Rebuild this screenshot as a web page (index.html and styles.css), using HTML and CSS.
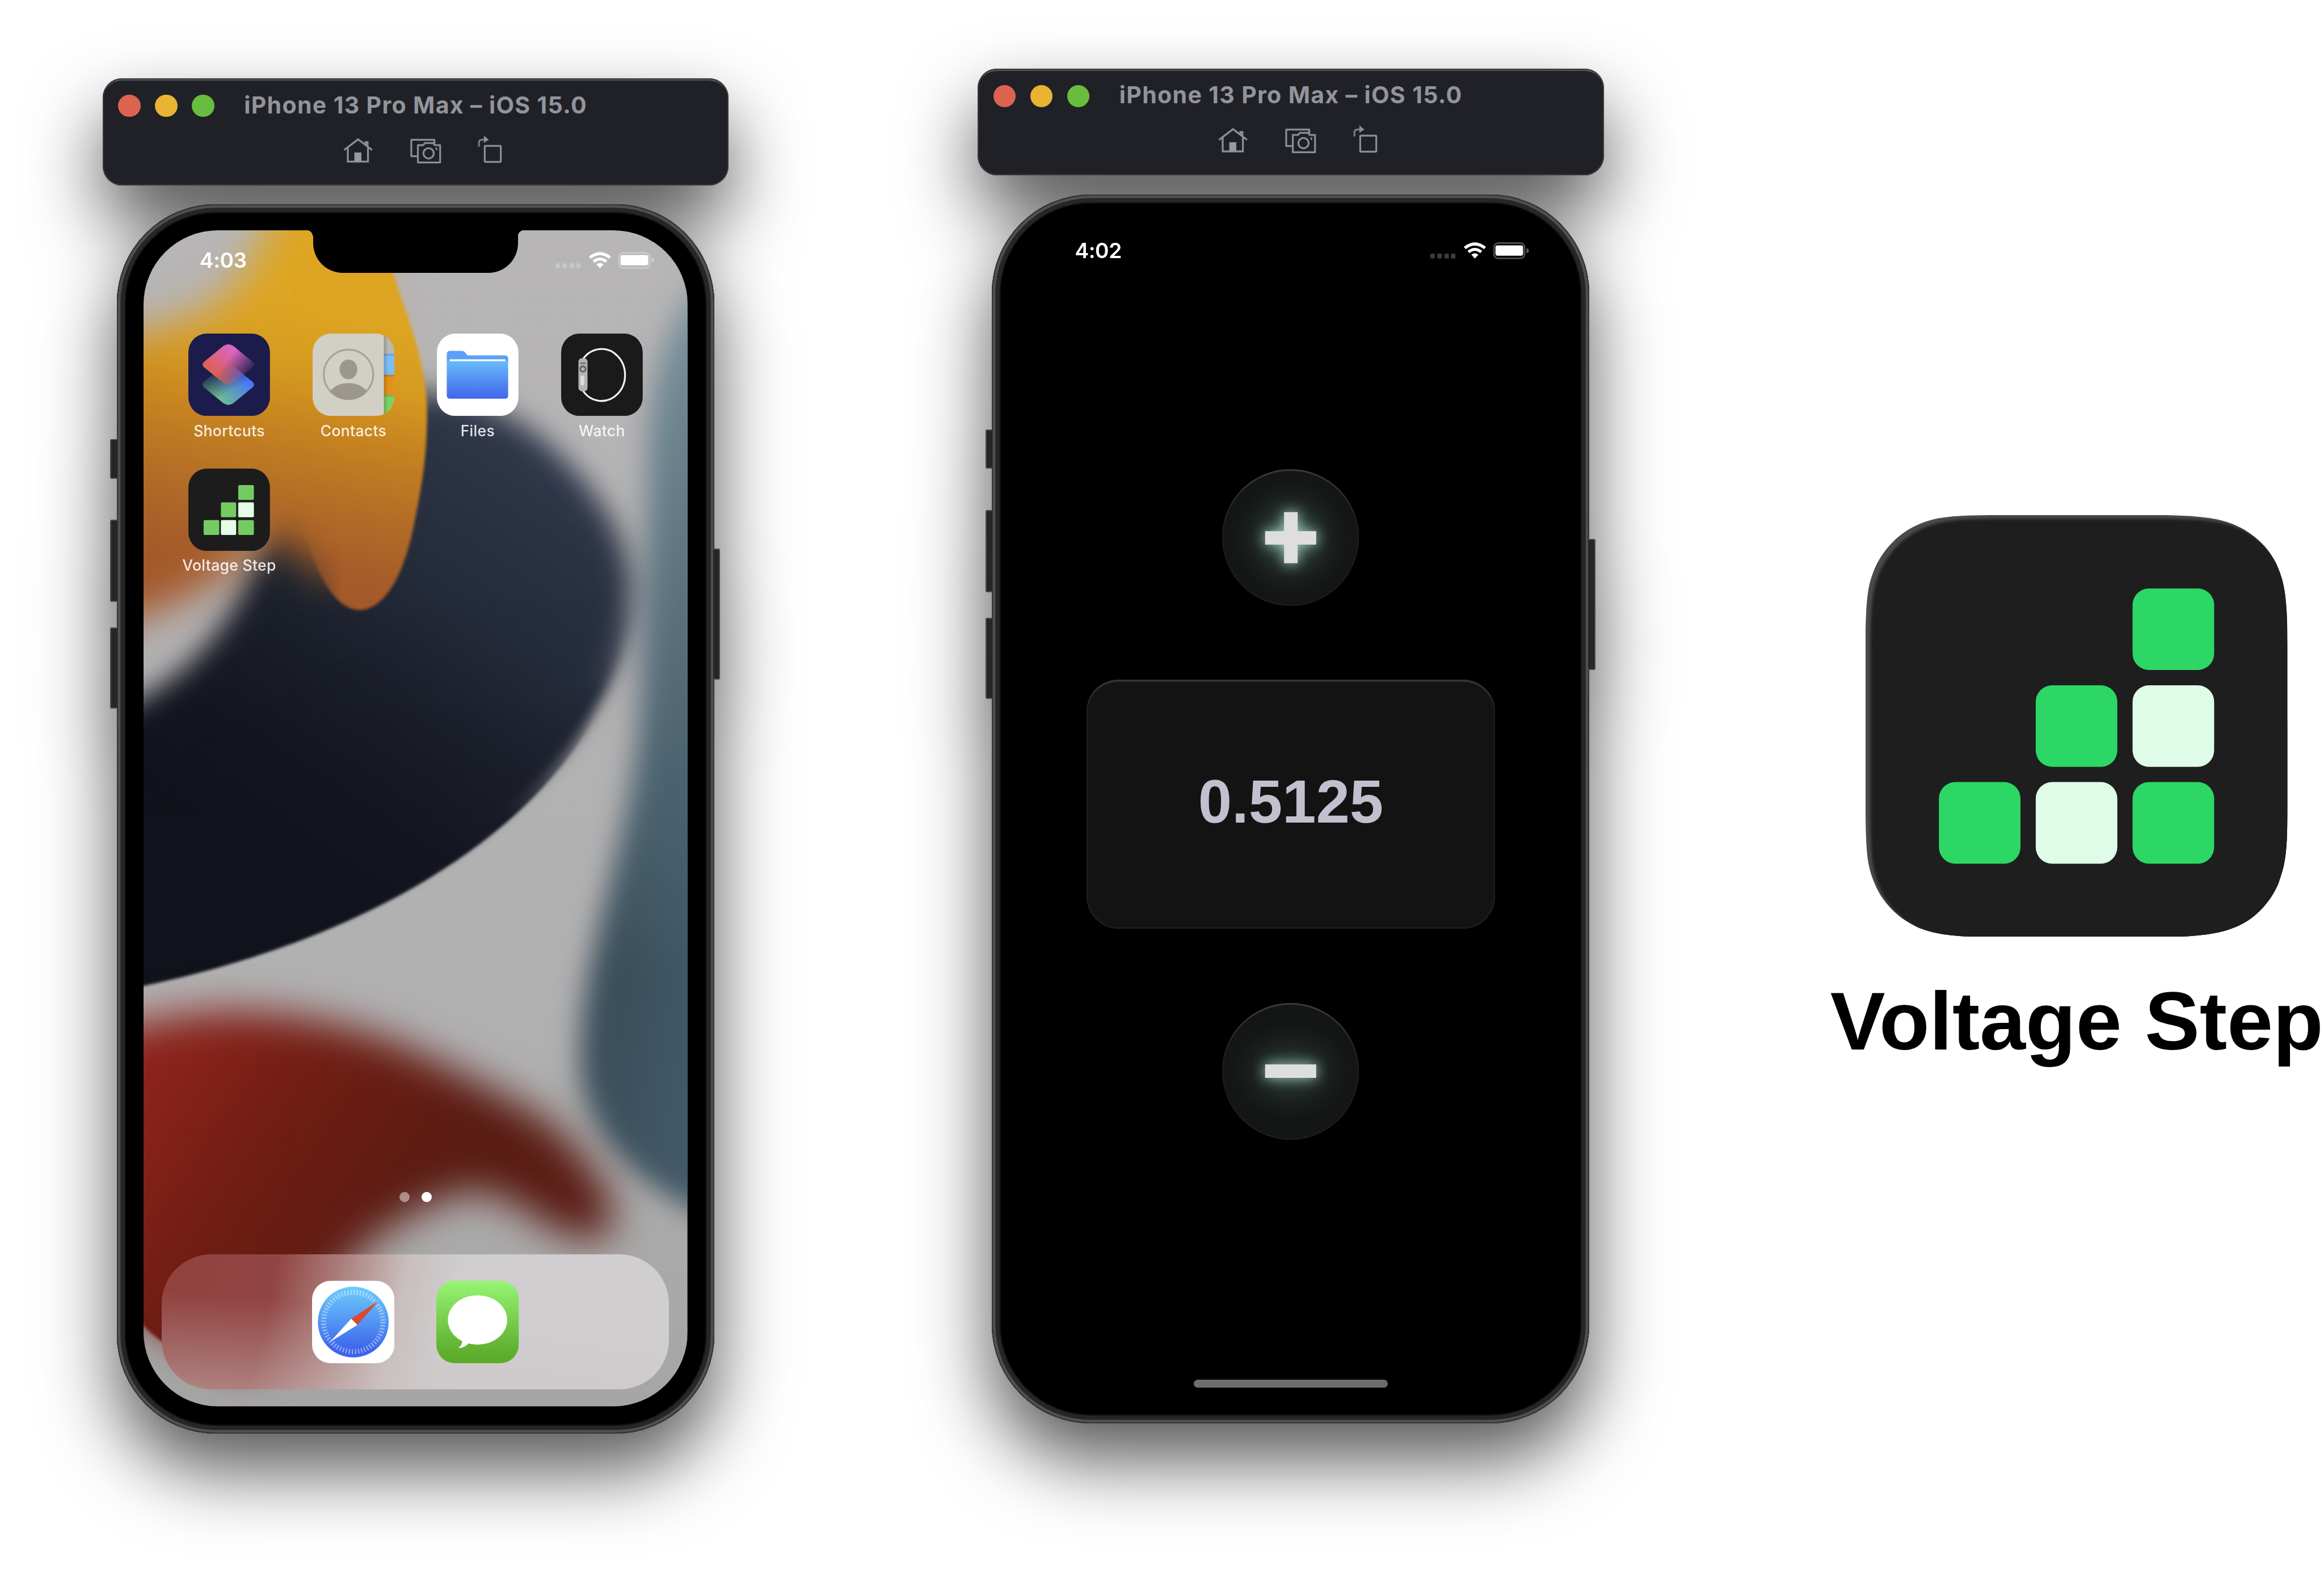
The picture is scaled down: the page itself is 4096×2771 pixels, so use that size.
FILE: index.html
```html
<!DOCTYPE html>
<html lang="en">
<head>
<meta charset="utf-8">
<title>Voltage Step</title>
<link rel="stylesheet" href="styles.css">
</head>
<body>
<svg class="defs" width="0" height="0" aria-hidden="true">
  <symbol id="i-home" viewBox="0 0 72 64">
    <path d="M2 31 36 5l34 26M11 25v34h49V25M54 18V12h5v12" fill="none" stroke="#8c9099" stroke-width="4.4"/>
    <path d="M27 59V37h17v22z" fill="#969aa4"/>
  </symbol>
  <symbol id="i-shot" viewBox="0 0 78 64">
    <g fill="none" stroke="#8a8e96" stroke-width="4.4" stroke-linejoin="round">
      <path d="M18 46H4V6h56v11"/>
      <path d="M20 19h13l4-5h20l4 5h13v42H20z"/>
      <circle cx="46" cy="39" r="12.5"/>
      <path d="M63 28h4" stroke-width="6"/>
    </g>
  </symbol>
  <symbol id="i-rotate" viewBox="0 0 60 68">
    <rect x="17" y="25" width="39" height="39" rx="2" fill="none" stroke="#8a8e96" stroke-width="4.4"/>
    <path d="M3 27V17q0-7 7-7h7" fill="none" stroke="#7b7f87" stroke-width="4.2"/>
    <path d="M15 0l12 10-12 8z" fill="#8a8e96"/>
  </symbol>
  <symbol id="i-status" viewBox="0 0 240 44">
    <g fill="#fff" fill-opacity=".24">
      <rect x="0" y="29" width="11" height="12" rx="3"/><rect x="17" y="29" width="11" height="12" rx="3"/><rect x="34" y="29" width="11" height="12" rx="3"/><rect x="50" y="29" width="11" height="12" rx="3"/>
    </g>
    <g fill="none" stroke="#fff" stroke-width="7.2">
      <path d="M83.500 15.500Q108 -4.500 132.500 15.500"/>
      <path d="M92.500 25Q108 12.500 123.500 25"/>
    </g>
    <path d="M99.500 31.500Q108 25 116.500 31.500L108 41z" fill="#fff"/>
    <rect x="154.500" y="3.500" width="74" height="37" rx="10" fill="none" stroke="#fff" stroke-opacity=".3" stroke-width="4"/>
    <rect x="158" y="9" width="67" height="25" rx="5" fill="#fff"/>
    <path d="M233 16q6 1 6 6t-6 6z" fill="#fff" fill-opacity=".35"/>
  </symbol>
</svg>

<main class="board">
  <section class="device">
    <header class="bar">
      <div class="bar-title">
        <i class="light red"></i><i class="light amber"></i><i class="light green"></i>
        <h2>iPhone 13 Pro Max – iOS 15.0</h2>
      </div>
      <div class="bar-tools">
        <svg class="t-home"><use href="#i-home"/></svg>
        <svg class="t-shot"><use href="#i-shot"/></svg>
        <svg class="t-rotate"><use href="#i-rotate"/></svg>
      </div>
    </header>
    <div class="phone">
      <i class="key k1"></i><i class="key k2"></i><i class="key k3"></i><i class="key k4"></i>
      <div class="screen home">
        <svg class="wallpaper" viewBox="0 0 1320 2855" preserveAspectRatio="none" aria-hidden="true">
          <defs>
            <linearGradient id="base" x1="0" y1="0" x2="0" y2="1"><stop offset="0" stop-color="#b7b5b6"/><stop offset=".7" stop-color="#b1b0b1"/><stop offset="1" stop-color="#a6a5a5"/></linearGradient>
            <linearGradient id="teal" gradientUnits="userSpaceOnUse" x1="0" y1="0" x2="0" y2="2400"><stop offset="0" stop-color="#92a2ab"/><stop offset=".12" stop-color="#738b96"/><stop offset=".35" stop-color="#5d7480"/><stop offset=".55" stop-color="#4c626e"/><stop offset=".75" stop-color="#384c58"/><stop offset="1" stop-color="#3d5260"/></linearGradient>
            <linearGradient id="tealR" gradientUnits="userSpaceOnUse" x1="1130" y1="0" x2="1320" y2="0"><stop offset="0" stop-color="#4a6576" stop-opacity="0"/><stop offset="1" stop-color="#4a6576" stop-opacity=".45"/></linearGradient>
            <linearGradient id="navy" gradientUnits="userSpaceOnUse" x1="1080" y1="600" x2="420" y2="1620"><stop offset="0" stop-color="#2f374a"/><stop offset=".35" stop-color="#242b3a"/><stop offset=".58" stop-color="#1a1e29"/><stop offset=".8" stop-color="#131620"/><stop offset="1" stop-color="#10131b"/></linearGradient>
            <linearGradient id="gold" gradientUnits="userSpaceOnUse" x1="470" y1="200" x2="330" y2="900"><stop offset="0" stop-color="#dda522"/><stop offset=".22" stop-color="#d69a20"/><stop offset=".42" stop-color="#c68220"/><stop offset=".66" stop-color="#b36c27"/><stop offset=".86" stop-color="#a75c29"/><stop offset="1" stop-color="#a35729"/></linearGradient>
            <linearGradient id="rust" gradientUnits="userSpaceOnUse" x1="0" y1="2000" x2="620" y2="2420"><stop offset="0" stop-color="#8e241d"/><stop offset=".5" stop-color="#701d14"/><stop offset="1" stop-color="#591b12"/></linearGradient>
            <linearGradient id="fadeMid" gradientUnits="userSpaceOnUse" x1="0" y1="900" x2="0" y2="1120"><stop offset="0" stop-color="#000"/><stop offset="1" stop-color="#fff"/></linearGradient>
            <linearGradient id="fadeLow" gradientUnits="userSpaceOnUse" x1="0" y1="1160" x2="0" y2="1420"><stop offset="0" stop-color="#000"/><stop offset="1" stop-color="#fff"/></linearGradient>
            <linearGradient id="fadeRight" gradientUnits="userSpaceOnUse" x1="350" y1="0" x2="480" y2="0"><stop offset="0" stop-color="#000"/><stop offset="1" stop-color="#fff"/></linearGradient>
            <mask id="mMid" maskUnits="userSpaceOnUse" x="-300" y="-300" width="2000" height="3400"><rect x="-300" y="-300" width="2000" height="3400" fill="url(#fadeMid)"/></mask>
            <mask id="mLow" maskUnits="userSpaceOnUse" x="-300" y="-300" width="2000" height="3400"><rect x="-300" y="-300" width="2000" height="3400" fill="url(#fadeLow)"/></mask>
            <mask id="mRight" maskUnits="userSpaceOnUse" x="-300" y="-300" width="2000" height="3400"><rect x="-300" y="-300" width="2000" height="3400" fill="url(#fadeRight)"/></mask>
            <filter id="b4" filterUnits="userSpaceOnUse" color-interpolation-filters="sRGB" x="-400" y="-400" width="2200" height="3600"><feGaussianBlur stdDeviation="4"/></filter>
            <filter id="b16" filterUnits="userSpaceOnUse" color-interpolation-filters="sRGB" x="-400" y="-400" width="2200" height="3600"><feGaussianBlur stdDeviation="15"/></filter>
            <filter id="b32" filterUnits="userSpaceOnUse" color-interpolation-filters="sRGB" x="-400" y="-400" width="2200" height="3600"><feGaussianBlur stdDeviation="34"/></filter>
            <filter id="b45" filterUnits="userSpaceOnUse" color-interpolation-filters="sRGB" x="-400" y="-400" width="2200" height="3600"><feGaussianBlur stdDeviation="48"/></filter>
          </defs>
          <rect width="1320" height="2855" fill="url(#base)"/>
          <g filter="url(#b32)">
            <path d="M1400 60C1290 200 1225 300 1225 600L1205 1150C1190 1500 1050 1750 1060 2050C1085 2200 1180 2320 1450 2430V0Z" fill="url(#teal)"/>
            <path d="M1200 1250H1500V2400C1300 2350 1180 2250 1130 2050Z" fill="url(#tealR)"/>
          </g>
          <g filter="url(#b32)">
            <path d="M-100 1180C60 1120 170 1010 230 890C290 760 330 560 480 440C640 360 820 390 960 500C1110 630 1185 760 1184 880C1175 1000 1130 1090 1030 1210C860 1370 500 1560 -100 1690Z" fill="url(#navy)"/>
          </g>
          <g mask="url(#mMid)"><path filter="url(#b16)" d="M-200 1450L300 1200L700 950L1050 780L1180 842C1174 1335 625 1680 -10 1805L-200 1840Z" fill="url(#navy)"/></g>
          <g mask="url(#mLow)"><path filter="url(#b4)" d="M-200 1500L100 1350L400 1200L800 1000L1183 842C1180 1350 640 1700 0 1834L-200 1870Z" fill="url(#navy)"/></g>
          <path filter="url(#b45)" d="M345 -200H500L595 400L560 780L440 850C400 800 330 720 280 760C200 850 120 900 -200 1010V300C-80 260 60 240 150 190C250 120 300 40 345 -200Z" fill="url(#gold)"/>
          <g mask="url(#mRight)"><path filter="url(#b4)" d="M330 -100H520C580 30 600 80 620 150C665 270 688 360 688 442C688 560 672 640 652 735C630 830 590 920 523 922C475 918 440 870 405 780L330 600Z" fill="url(#gold)"/></g>
          <path filter="url(#b45)" d="M-200 1980C-60 1930 100 1890 246 1895C420 1905 560 1945 676 2000C800 2060 900 2110 985 2165C1075 2245 1150 2345 1140 2410C1130 2465 1050 2460 963 2405C900 2360 850 2330 780 2335C690 2360 560 2430 490 2520C430 2600 390 2720 270 2750H200L-10 2640L-200 2560Z" fill="url(#rust)"/>
          <path filter="url(#b4)" d="M-50 2200H360V2500L240 2720H90C60 2710 20 2690 -50 2600Z" fill="url(#rust)"/>
        </svg>
        <div class="notch"></div>
        <div class="status"><time>4:03</time><svg><use href="#i-status"/></svg></div>
        <div class="apps">
          <figure class="app">
            <svg viewBox="0 0 198 200">
              <defs>
                <linearGradient id="sA" gradientUnits="userSpaceOnUse" x1="55" y1="95" x2="112" y2="35"><stop offset="0" stop-color="#de6150"/><stop offset="1" stop-color="#d765cc"/></linearGradient>
                <linearGradient id="sF" gradientUnits="userSpaceOnUse" x1="92" y1="68" x2="138" y2="104"><stop offset="0" stop-color="#fff"/><stop offset="1" stop-color="#222"/></linearGradient>
                <linearGradient id="sB" gradientUnits="userSpaceOnUse" x1="80" y1="165" x2="145" y2="112"><stop offset="0" stop-color="#70bc90"/><stop offset="1" stop-color="#4676fc"/></linearGradient>
                <linearGradient id="sN" gradientUnits="userSpaceOnUse" x1="55" y1="96" x2="85" y2="150"><stop offset="0" stop-color="#1c1c4c" stop-opacity=".9"/><stop offset="1" stop-color="#1c1c4c" stop-opacity="0"/></linearGradient>
                <mask id="sM"><rect width="200" height="200" fill="url(#sF)"/></mask>
              </defs>
              <rect width="198" height="200" rx="45" fill="#1c1c4c"/>
              <path d="M85 79Q97 71 109 79L153 115Q166 124 153 133L109 169Q97 177 85 169L41 133Q28 124 41 115Z" fill="url(#sB)"/>
              <path d="M85 79Q97 71 109 79L153 115Q166 124 153 133L109 169Q97 177 85 169L41 133Q28 124 41 115Z" fill="url(#sN)"/>
              <path mask="url(#sM)" d="M85 30Q97 22 109 30L153 66Q166 75 153 84L109 120Q97 128 85 120L41 84Q28 75 41 66Z" fill="url(#sA)"/>
            </svg>
            <figcaption>Shortcuts</figcaption>
          </figure>
          <figure class="app">
            <svg viewBox="0 0 198 200">
              <defs><clipPath id="cR"><rect width="198" height="200" rx="45"/></clipPath><clipPath id="cC"><circle cx="87" cy="99" r="62"/></clipPath>
              <linearGradient id="cS" x1="0" x2="1"><stop offset="0" stop-opacity=".2"/><stop offset="1" stop-opacity="0"/></linearGradient></defs>
              <g clip-path="url(#cR)">
                <rect width="198" height="200" fill="#d2d0c4"/>
                <rect x="173" width="26" height="49" fill="#bab8b0"/>
                <rect x="173" y="49" width="26" height="51" fill="#7abdf8"/>
                <rect x="173" y="100" width="26" height="49" fill="#e4911c"/>
                <rect x="173" y="149" width="26" height="52" fill="#7ed161"/>
                <path d="M173 49h26v4h-26zM173 100h26v4h-26zM173 149h26v4h-26z" fill="#000" fill-opacity=".14"/>
                <rect x="173" width="10" height="200" fill="url(#cS)"/>
              </g>
              <circle cx="87" cy="99" r="60" fill="none" stroke="#a8a499" stroke-width="4.500"/>
              <g fill="#9c978e"><ellipse cx="87" cy="87" rx="21.500" ry="24"/><ellipse clip-path="url(#cC)" cx="87" cy="160" rx="52" ry="40"/></g>
            </svg>
            <figcaption>Contacts</figcaption>
          </figure>
          <figure class="app">
            <svg viewBox="0 0 198 200">
              <defs><linearGradient id="fG" x1="0" y1="0" x2="0" y2="1"><stop offset="0" stop-color="#68bcf8"/><stop offset="1" stop-color="#4165ec"/></linearGradient></defs>
              <rect width="198" height="200" rx="45" fill="#fff"/>
              <path d="M24 70V50q0-8 8-8h29q5 0 8 4l5 7h91q8 0 8 8v10z" fill="#5b9ff6"/>
              <path d="M24 66h149v84q0 8-8 8H32q-8 0-8-8z" fill="url(#fG)"/>
              <rect x="31" y="62.500" width="135" height="4.500" fill="#fff"/>
            </svg>
            <figcaption>Files</figcaption>
          </figure>
          <figure class="app">
            <svg viewBox="0 0 198 200">
              <rect width="198" height="200" rx="45" fill="#1a1a1a"/>
              <path d="M53 62A57 63 0 1 1 53 139" fill="none" stroke="#efefef" stroke-width="4.500"/>
              <rect x="42" y="60" width="22" height="80" rx="8" fill="#b4b4b4"/>
              <rect x="47" y="102" width="9" height="24" rx="3" fill="#dcdcdc"/>
              <circle cx="53" cy="86" r="6.500" fill="#b4b4b4" stroke="#5d5d5d" stroke-width="4"/>
              <path d="M46 72h14" stroke="#777" stroke-width="4"/>
            </svg>
            <figcaption>Watch</figcaption>
          </figure>
          <figure class="app">
            <svg viewBox="0 0 198 200">
              <rect width="198" height="200" rx="45" fill="#1c1c1c"/>
              <g fill="#74cb62"><rect x="121" y="40" width="38" height="36" rx="3"/><rect x="79" y="82" width="37" height="36" rx="3"/><rect x="37" y="125" width="38" height="36" rx="3"/><rect x="121" y="125" width="38" height="36" rx="3"/></g>
              <g fill="#e5fde6"><rect x="121" y="82" width="38" height="36" rx="3"/><rect x="79" y="125" width="37" height="36" rx="3"/></g>
            </svg>
            <figcaption>Voltage Step</figcaption>
          </figure>
        </div>
        <div class="pages"><i></i><i class="on"></i></div>
        <div class="dock">
          <svg viewBox="0 0 200 200">
            <defs><linearGradient id="safG" x1="0" y1="0" x2="0" y2="1"><stop offset="0" stop-color="#70cbfc"/><stop offset=".5" stop-color="#5295f3"/><stop offset=".9" stop-color="#3d63ec"/></linearGradient></defs>
            <rect width="200" height="200" rx="45" fill="#fff"/>
            <circle cx="100" cy="100" r="86" fill="url(#safG)"/>
            <circle cx="100" cy="100" r="72" fill="none" stroke="#fff" stroke-opacity=".42" stroke-width="12" stroke-dasharray="3.400 4.140"/>
            <path d="M161 49 110 107 95 92z" fill="#d94a30"/>
            <path d="M44 148 95 92 110 107z" fill="#fff"/>
          </svg>
          <svg viewBox="0 0 200 200">
            <defs><linearGradient id="msG" x1="0" y1="0" x2="0" y2="1"><stop offset="0" stop-color="#97f573"/><stop offset=".85" stop-color="#5fb02f"/><stop offset="1" stop-color="#5bab2b"/></linearGradient></defs>
            <rect width="200" height="200" rx="45" fill="url(#msG)"/>
            <ellipse cx="100" cy="95" rx="72" ry="60" fill="#fff"/>
            <path d="M62 140q4 14-9 23 16 0 26-12z" fill="#fff"/>
          </svg>
        </div>
      </div>
    </div>
  </section>

  <section class="device second">
    <header class="bar">
      <div class="bar-title">
        <i class="light red"></i><i class="light amber"></i><i class="light green"></i>
        <h2>iPhone 13 Pro Max – iOS 15.0</h2>
      </div>
      <div class="bar-tools">
        <svg class="t-home"><use href="#i-home"/></svg>
        <svg class="t-shot"><use href="#i-shot"/></svg>
        <svg class="t-rotate"><use href="#i-rotate"/></svg>
      </div>
    </header>
    <div class="phone">
      <i class="key k1"></i><i class="key k2"></i><i class="key k3"></i><i class="key k4"></i>
      <div class="screen stepper">
        <div class="status"><time>4:02</time><svg><use href="#i-status"/></svg></div>
        <button class="round plus" aria-label="Increase"><svg viewBox="0 0 126 126"><path d="M47 1h33v46h45v33H80v45H47V80H1V47h46z"/></svg></button>
        <output class="readout">0.5125</output>
        <button class="round" aria-label="Decrease"><svg viewBox="0 0 126 126"><path d="M1 47h124v33H1z"/></svg></button>
        <i class="indicator"></i>
      </div>
    </div>
  </section>

  <section class="brand">
    <svg viewBox="0 0 1024 1024" aria-hidden="true">
      <defs>
        <clipPath id="lC"><path id="sq" d="M320 0H704C838 0 870 14 892 22C945 44 985 85 1002 130C1016 165 1024 200 1024 320V704C1024 838 1016 850 1002 894C980 945 940 985 892 1002C860 1014 820 1024 704 1024H320C190 1024 165 1014 130 1002C80 980 40 940 22 894C8 860 0 838 0 704V320C0 190 8 165 22 130C44 80 85 40 130 22C165 8 190 0 320 0Z"/></clipPath>
        <filter id="lB" color-interpolation-filters="sRGB" x="-10%" y="-10%" width="120%" height="120%"><feGaussianBlur stdDeviation="4"/></filter>
      </defs>
      <g clip-path="url(#lC)">
        <rect width="1024" height="1024" fill="#4b4b4b"/>
        <use href="#sq" transform="translate(12 9)" fill="#1e1e1e" filter="url(#lB)"/>
        <path d="M700 500H1024V1024H200V700Z" fill="#1e1e1e"/>
      </g>
      <g fill="#2dd766"><rect x="648" y="178" width="198" height="198" rx="40"/><rect x="413" y="413" width="198" height="198" rx="40"/><rect x="178" y="648" width="198" height="198" rx="40"/><rect x="648" y="648" width="198" height="198" rx="40"/></g>
      <g fill="#dffce8"><rect x="648" y="413" width="198" height="198" rx="40"/><rect x="413" y="648" width="198" height="198" rx="40"/></g>
    </svg>
    <h1>Voltage Step</h1>
  </section>
</main>
</body>
</html>
```

FILE: styles.css
```css
/* 1rem is 1/56.4 of the board width */
html { font-size: 72.6241px; }
* { box-sizing: border-box; margin: 0; padding: 0; }
body { background: #fff; overflow: hidden; font-family: Inter, "Liberation Sans", sans-serif; }
.defs { position: absolute; }
.board { display: flex; align-items: flex-start; width: 56.4rem; height: 38.15rem; overflow: hidden; padding: .02rem 0 0 2.49rem; }

.device { flex: none; width: 15.19rem; margin-top: 1.88rem; display: flex; flex-direction: column; align-items: center; gap: .46rem; filter: drop-shadow(0 .9rem .9rem rgba(0, 0, 0, .66)); }
.device.second { margin: 1.64rem 0 0 6.05rem; }

.bar { width: 100%; height: 2.6rem; border-radius: .47rem; background: #202126; box-shadow: inset 0 0 0 .03rem #36373b, inset 0 .05rem .01rem #66676a; padding: .33rem 0 0 .38rem; display: flex; flex-direction: column; }
.bar-title { display: flex; align-items: center; height: .68rem; gap: .355rem; }
.light { width: .54rem; height: .54rem; border-radius: 50%; }
.red { background: #dd6351; }
.amber { background: #e9b434; }
.green { background: #68bd3f; }
.bar-title h2 { font-size: .565rem; font-weight: 700; line-height: .68rem; color: #92949b; margin: -.03rem 0 0 .37rem; white-space: nowrap; letter-spacing: .0185rem; }
.bar-tools { display: flex; align-items: flex-end; margin: .38rem 0 0 5.46rem; height: .68rem; }
.bar-tools svg { display: block; }
.t-home { width: .72rem; height: .64rem; }
.t-shot { width: .78rem; height: .64rem; margin-left: .89rem; }
.t-rotate { width: .6rem; height: .68rem; margin-left: .88rem; }

.phone { position: relative; width: 14.5rem; height: 29.83rem; border-radius: 2.4rem; background: #000; box-shadow: inset 0 0 0 .025rem #333, inset 0 0 0 .085rem #505050, inset 0 0 0 .19rem #262626, inset 0 0 0 .22rem #0f0f0f; padding: .63rem .65rem .65rem; }
.key { position: absolute; left: -.16rem; width: .17rem; background: #262626; border: .03rem solid #4a4a4a; border-right: 0; border-radius: .04rem 0 0 .04rem; }
.k1 { top: 5.7rem; height: .96rem; }
.k2 { top: 7.66rem; height: 1.99rem; }
.k3 { top: 10.27rem; height: 1.97rem; }
.k4 { left: auto; right: -.14rem; top: 8.36rem; height: 3.18rem; border: .03rem solid #4a4a4a; border-left: 0; border-radius: 0 .04rem .04rem 0; }

.screen { position: relative; width: 13.2rem; height: 28.55rem; border-radius: 1.8rem; overflow: hidden; background: #000; display: flex; flex-direction: column; align-items: center; }
.wallpaper { position: absolute; inset: 0; width: 100%; height: 100%; }
.notch { position: absolute; top: 0; left: 4.11rem; width: 4.98rem; height: 1.03rem; background: #000; border-radius: 0 0 .72rem .72rem; }
.notch::before, .notch::after { content: ""; position: absolute; top: 0; width: .14rem; height: .14rem; }
.notch::before { right: 100%; background: radial-gradient(circle at 0 100%, transparent .135rem, #000 .14rem); }
.notch::after { left: 100%; background: radial-gradient(circle at 100% 100%, transparent .135rem, #000 .14rem); }

.status { position: relative; width: 100%; height: 1.46rem; padding: 0 .81rem 0 1.36rem; display: flex; align-items: center; justify-content: space-between; }
.status time { color: #fff; font-size: .51rem; font-weight: 600; letter-spacing: -.01em; }
.status svg { width: 2.4rem; height: .44rem; }

.apps { position: relative; display: grid; grid-template-columns: repeat(4, 1.98rem); column-gap: 1.035rem; grid-auto-rows: 3.27rem; margin: 1.05rem 0 0; }
.app { display: flex; flex-direction: column; align-items: center; }
.app svg { flex: none; width: 1.98rem; height: 2rem; }
.app figcaption { margin-top: .1rem; font-size: .365rem; line-height: .5rem; font-weight: 500; color: rgba(255, 255, 255, .86); white-space: nowrap; letter-spacing: .012em; }

.pages { position: relative; display: flex; gap: .29rem; margin-top: auto; }
.pages i { width: .25rem; height: .25rem; border-radius: 50%; background: rgba(255, 255, 255, .45); }
.pages .on { background: #fff; }
.dock { position: relative; width: 12.31rem; height: 3.27rem; margin: 1.27rem 0 .42rem; border-radius: 1.2rem; display: flex; align-items: center; justify-content: center; gap: 1.02rem;
  background: linear-gradient(185deg, rgba(205, 195, 195, 0) 45%, rgba(205, 195, 195, .5) 100%), linear-gradient(103deg, #90413e 0%, #924643 22%, #a97a77 33%, #c8bebd 46%, #cfcdce 56%, #d0ced0 100%); }
.dock svg { width: 2rem; height: 2.02rem; }

.round { flex: none; position: relative; width: 3.32rem; height: 3.32rem; border: 0; border-radius: 50%; background: #141615; display: flex; align-items: center; justify-content: center; box-shadow: inset 0 .05rem .02rem -.01rem #3a3b3b, inset 0 0 0 .025rem #1f2020; }
.round.plus { margin-top: 4.58rem; }
.round svg { width: 1.26rem; height: 1.26rem; overflow: visible; fill: #dedede; filter: drop-shadow(0 0 .16rem rgba(190, 235, 222, .85)) drop-shadow(0 0 .45rem rgba(130, 200, 185, .65)); }
.readout { flex: none; width: 9.92rem; height: 6.04rem; margin: 1.79rem 0 1.8rem; padding-bottom: .1rem; border-radius: .78rem; background: #131313; box-shadow: inset 0 .06rem .02rem -.01rem #353535, inset 0 0 0 .03rem #202020; display: flex; align-items: center; justify-content: center; font: 700 1.47rem "Liberation Sans", Arial, sans-serif; color: #c3bfce; }
.indicator { width: 4.71rem; height: .19rem; margin: auto 0 .22rem; border-radius: .1rem; background: #6d6d6d; }

.brand { flex: none; display: flex; flex-direction: column; align-items: center; width: 12.1rem; margin: 12.48rem 0 0 5.43rem; }
.brand svg { display: block; width: 10.24rem; height: 10.24rem; }
.brand h1 { font: 700 2rem/2.3rem "Liberation Sans", Arial, sans-serif; color: #000; white-space: nowrap; margin-top: .9rem; }
```
